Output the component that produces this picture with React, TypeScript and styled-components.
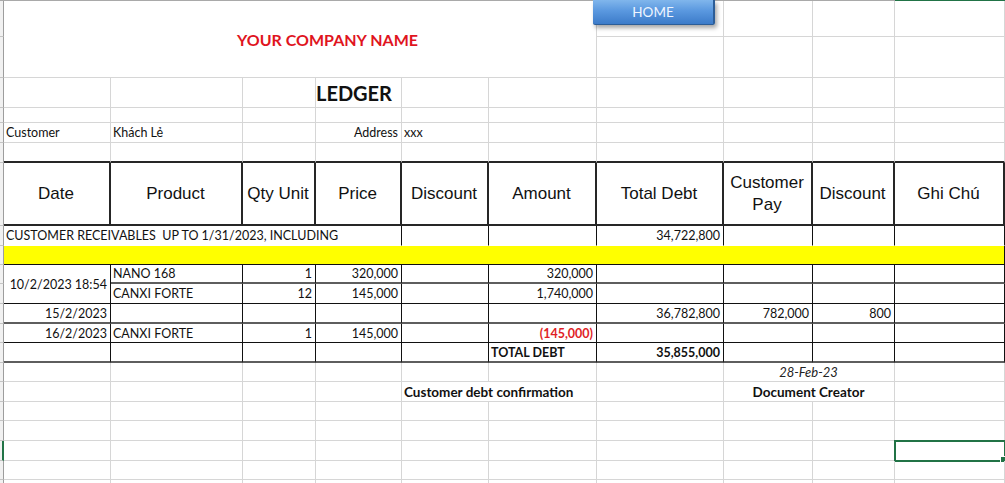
import React from 'react';
import styled, { createGlobalStyle, css } from 'styled-components';

const GlobalStyle = createGlobalStyle`
    html, body {
        margin: 0;
        padding: 0;
        background: #ffffff;
        overflow: hidden;
    }
    body {
        font-family: Lato, "Liberation Sans", sans-serif;
    }
`;

// column widths: row-header sliver, then A..J
const COLS = [4, 107, 132, 73, 86, 87, 108, 127, 89, 82, 110];
// edge line, then rows 1..21
const ROWS = [1, 36, 41, 30, 15, 20, 20, 63, 20, 19, 19, 20, 20, 19, 20, 19, 20, 19, 20, 20, 19, 20];

type Line = 'grid' | 'none' | 'thin' | 'mid' | 'head';
type Align = 'left' | 'right' | 'center';
type Tone = 'body' | 'bold' | 'sign' | 'neg' | 'date' | 'head' | 'title' | 'company';

const LINE: Record<Line, string> = {
    grid: '1px solid #d6d6d6',
    none: '1px solid transparent',
    thin: '1px solid #111111',
    mid: '2px solid #5e5e5e',
    head: '2px solid #262626',
};

const JUSTIFY: Record<Align, string> = {
    left: 'flex-start',
    right: 'flex-end',
    center: 'center',
};

const TONE: Record<Tone, ReturnType<typeof css>> = {
    body: css`
        font-size: 12.5px;
        color: #111;
    `,
    bold: css`
        font-size: 12.5px;
        font-weight: 700;
        color: #111;
    `,
    sign: css`
        font-size: 13.5px;
        font-weight: 700;
        color: #111;
    `,
    neg: css`
        font-size: 12.5px;
        font-weight: 700;
        color: #e01e26;
    `,
    date: css`
        font-size: 13px;
        font-style: italic;
        color: #222;
    `,
    head: css`
        font-family: "Liberation Sans", Arial, sans-serif;
        font-size: 17px;
        line-height: 22px;
        color: #111;
        white-space: normal;
    `,
    title: css`
        font-size: 20px;
        font-weight: 700;
        color: #111;
        padding-left: 0;
    `,
    company: css`
        font-size: 16px;
        font-weight: 700;
        color: #e0141e;
        padding-left: 58px;
    `,
};

const Sheet = styled.div`
    position: relative;
    display: grid;
    grid-template-columns: ${COLS.map((w) => `${w}px`).join(' ')};
    grid-template-rows: ${ROWS.map((h) => `${h}px`).join(' ')};
    width: 1005px;
`;

const EdgeTop = styled.div<{ $c: number; $active: boolean }>`
    grid-row: 1;
    grid-column: ${(p) => p.$c};
    background: ${(p) => (p.$active ? '#217346' : '#a9a9a9')};
`;

const RowHead = styled.div<{ $r: number; $active: boolean }>`
    grid-row: ${(p) => p.$r + 1};
    grid-column: 1;
    box-sizing: border-box;
    background: #f1f1f1;
    border-bottom: 1px solid #c4c4c4;
    border-right: ${(p) => (p.$active ? '2px solid #217346' : '1px solid #9d9d9d')};
`;

const Cell = styled.div<{
    $r: number;
    $c: number;
    $rs: number;
    $cs: number;
    $right: Line;
    $bottom: Line;
    $align: Align;
    $tone: Tone;
    $bg?: string;
    $selected?: boolean;
}>`
    grid-row: ${(p) => p.$r + 1} / span ${(p) => p.$rs};
    grid-column: ${(p) => p.$c + 1} / span ${(p) => p.$cs};
    position: relative;
    box-sizing: border-box;
    display: flex;
    align-items: center;
    justify-content: ${(p) => JUSTIFY[p.$align]};
    text-align: ${(p) => p.$align};
    padding: 0 3px 0 2px;
    border-right: ${(p) => LINE[p.$right]};
    border-bottom: ${(p) => LINE[p.$bottom]};
    background: ${(p) => p.$bg ?? 'transparent'};
    white-space: nowrap;
    ${(p) => TONE[p.$tone]}

    ${(p) =>
        p.$selected &&
        css`
            outline: 2px solid #217346;
            outline-offset: -1px;

            &::after {
                content: '';
                position: absolute;
                right: -3px;
                bottom: -3px;
                width: 5px;
                height: 5px;
                background: #217346;
                border: 1px solid #fff;
            }
        `}
`;

const HomeButton = styled.button`
    position: absolute;
    left: 593px;
    top: 0;
    width: 122px;
    height: 25px;
    padding: 0;
    border: none;
    border-right: 2px solid #2c5d97;
    border-bottom: 1px solid #2c5d97;
    border-radius: 0 0 2px 2px;
    background: linear-gradient(180deg, #80b6ec 0%, #5a98df 45%, #3c7bc9 100%);
    box-shadow: 2px 3px 4px rgba(0, 0, 0, 0.35);
    color: #eef5ff;
    font-family: Lato, "Liberation Sans", sans-serif;
    font-size: 13.5px;
    cursor: pointer;
`;

interface Spec {
    r: number;
    c: number;
    rs?: number;
    cs?: number;
    text?: React.ReactNode;
    tone?: Tone;
    align?: Align;
    bg?: string;
}

const SPECS: Spec[] = [
    { r: 1, c: 1, rs: 2, cs: 6, text: 'YOUR COMPANY NAME', tone: 'company', align: 'center' },
    { r: 3, c: 4, text: 'LEDGER', tone: 'title' },
    { r: 5, c: 1, text: 'Customer' },
    { r: 5, c: 2, text: 'Khách Lẻ' },
    { r: 5, c: 4, text: 'Address', align: 'right' },
    { r: 5, c: 5, text: 'xxx' },

    { r: 7, c: 1, text: 'Date', tone: 'head', align: 'center' },
    { r: 7, c: 2, text: 'Product', tone: 'head', align: 'center' },
    { r: 7, c: 3, text: 'Qty Unit', tone: 'head', align: 'center' },
    { r: 7, c: 4, text: 'Price', tone: 'head', align: 'center' },
    { r: 7, c: 5, text: 'Discount', tone: 'head', align: 'center' },
    { r: 7, c: 6, text: 'Amount', tone: 'head', align: 'center' },
    { r: 7, c: 7, text: 'Total Debt', tone: 'head', align: 'center' },
    { r: 7, c: 8, text: <>Customer<br />Pay</>, tone: 'head', align: 'center' },
    { r: 7, c: 9, text: 'Discount', tone: 'head', align: 'center' },
    { r: 7, c: 10, text: 'Ghi Chú', tone: 'head', align: 'center' },

    { r: 8, c: 1, cs: 4, text: 'CUSTOMER RECEIVABLES\u00a0 UP TO 1/31/2023, INCLUDING' },
    { r: 8, c: 7, text: '34,722,800', align: 'right' },
    { r: 9, c: 1, cs: 10, bg: '#ffff00' },

    { r: 10, c: 1, rs: 2, text: '10/2/2023 18:54', align: 'right' },
    { r: 10, c: 2, text: 'NANO 168' },
    { r: 10, c: 3, text: '1', align: 'right' },
    { r: 10, c: 4, text: '320,000', align: 'right' },
    { r: 10, c: 6, text: '320,000', align: 'right' },
    { r: 11, c: 2, text: 'CANXI FORTE' },
    { r: 11, c: 3, text: '12', align: 'right' },
    { r: 11, c: 4, text: '145,000', align: 'right' },
    { r: 11, c: 6, text: '1,740,000', align: 'right' },

    { r: 12, c: 1, text: '15/2/2023', align: 'right' },
    { r: 12, c: 7, text: '36,782,800', align: 'right' },
    { r: 12, c: 8, text: '782,000', align: 'right' },
    { r: 12, c: 9, text: '800', align: 'right' },

    { r: 13, c: 1, text: '16/2/2023', align: 'right' },
    { r: 13, c: 2, text: 'CANXI FORTE' },
    { r: 13, c: 3, text: '1', align: 'right' },
    { r: 13, c: 4, text: '145,000', align: 'right' },
    { r: 13, c: 6, text: '(145,000)', tone: 'neg', align: 'right' },

    { r: 14, c: 6, text: 'TOTAL DEBT', tone: 'bold' },
    { r: 14, c: 7, text: '35,855,000', tone: 'bold', align: 'right' },

    { r: 15, c: 8, cs: 2, text: '28-Feb-23', tone: 'date', align: 'center' },
    { r: 16, c: 5, cs: 2, text: 'Customer debt confirmation', tone: 'sign' },
    { r: 16, c: 8, cs: 2, text: 'Document Creator', tone: 'sign', align: 'center' },
];

const SHEET_ROWS = ROWS.length - 1;
const SHEET_COLS = COLS.length - 1;
const SELECTED = { r: 19, c: 10 };

const bottomLine = (row: number): Line => {
    if (row === 6 || row === 7) return 'head';
    if (row === 8) return 'none';
    if (row === 10 || row === 12 || row === 14) return 'mid';
    if (row >= 9 && row <= 13) return 'thin';
    return 'grid';
};

const rightLine = (row: number): Line => {
    if (row === 7) return 'head';
    if (row >= 8 && row <= 14) return 'thin';
    return 'grid';
};

const App: React.FC = () => {
    const taken = new Set<string>();
    SPECS.forEach(({ r, c, rs = 1, cs = 1 }) => {
        for (let i = r; i < r + rs; i++) {
            for (let j = c; j < c + cs; j++) taken.add(`${i}:${j}`);
        }
    });

    const blanks: Spec[] = [];
    for (let r = 1; r <= SHEET_ROWS; r++) {
        for (let c = 1; c <= SHEET_COLS; c++) {
            if (!taken.has(`${r}:${c}`)) blanks.push({ r, c });
        }
    }

    return (
        <>
            <GlobalStyle />
            <Sheet>
                {COLS.map((_, i) => (
                    <EdgeTop key={`edge-${i}`} $c={i + 1} $active={i === SELECTED.c} />
                ))}
                {ROWS.slice(1).map((_, i) => (
                    <RowHead key={`rh-${i}`} $r={i + 1} $active={i + 1 === SELECTED.r} />
                ))}
                {[...SPECS, ...blanks].map(({ r, c, rs = 1, cs = 1, text, tone = 'body', align = 'left', bg }) => {
                    const last = r + rs - 1;
                    return (
                        <Cell
                            key={`${r}-${c}`}
                            $r={r}
                            $c={c}
                            $rs={rs}
                            $cs={cs}
                            $right={rightLine(last)}
                            $bottom={bottomLine(last)}
                            $align={align}
                            $tone={tone}
                            $bg={bg}
                            $selected={r === SELECTED.r && c === SELECTED.c}
                        >
                            {text}
                        </Cell>
                    );
                })}
                <HomeButton>HOME</HomeButton>
            </Sheet>
        </>
    );
};

export default App;
